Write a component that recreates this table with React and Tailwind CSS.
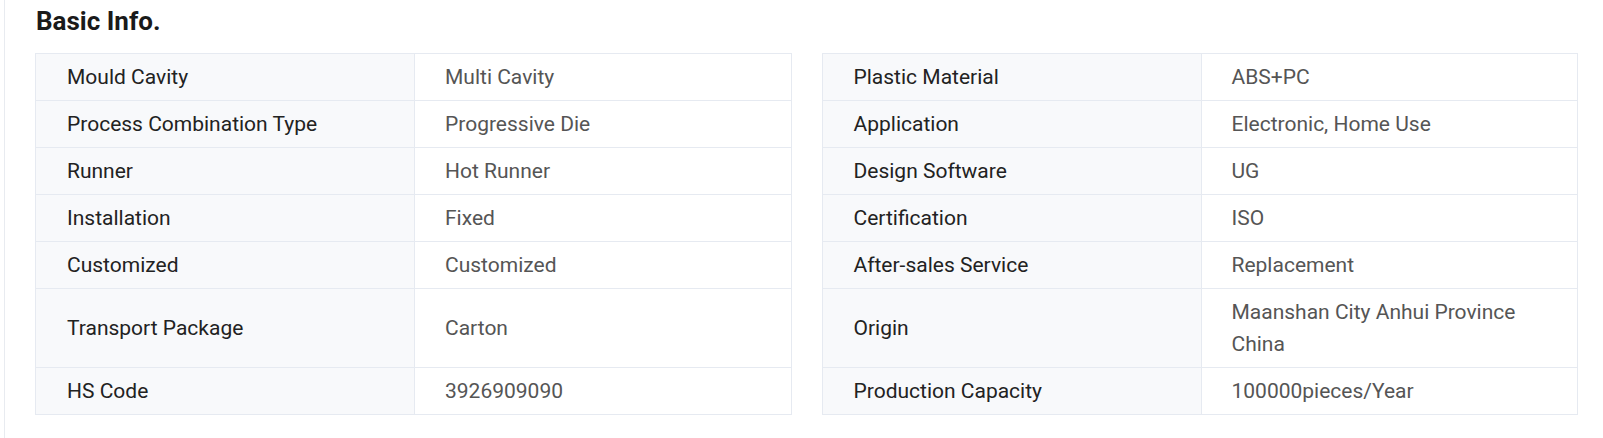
import React from "react";

const rows = [
  ["Mould Cavity", "Multi Cavity", "Plastic Material", "ABS+PC"],
  ["Process Combination Type", "Progressive Die", "Application", "Electronic, Home Use"],
  ["Runner", "Hot Runner", "Design Software", "UG"],
  ["Installation", "Fixed", "Certification", "ISO"],
  ["Customized", "Customized", "After-sales Service", "Replacement"],
  ["Transport Package", "Carton", "Origin", "Maanshan City Anhui Province China"],
  ["HS Code", "3926909090", "Production Capacity", "100000pieces/Year"],
];

function Half({ label, value, first }) {
  return (
    <div
      className={`flex border-x border-b border-[#e6eaf1] ${first ? "border-t" : ""}`}
    >
      <div className="w-[379px] shrink-0 flex items-center bg-[#f8f9fb] border-r border-[#e6eaf1] py-[7px] pl-[31px] pr-4 text-[#222222]">
        {label}
      </div>
      <div className="flex-1 min-w-0 flex items-center py-[7px] pl-[30px] pr-[30px] text-[#555555]">
        {value}
      </div>
    </div>
  );
}

export default function App() {
  return (
    <div
      className="w-[1603px] h-[438px] bg-white"
      style={{ fontFamily: "Roboto, 'Liberation Sans', sans-serif" }}
    >
      <div className="ml-1 h-full border-l border-[#e8ebf0] pl-[30px] pr-[25px] pt-[6px]">
        <h2 className="text-[26px] leading-[30px] font-bold text-[#1a1a1a] pl-[1px] mb-[17px]">
          Basic Info.
        </h2>
        <div className="grid grid-cols-2 gap-x-[30px] text-[21px] leading-[32px]">
          {rows.map((r, i) => (
            <React.Fragment key={i}>
              <Half label={r[0]} value={r[1]} first={i === 0} />
              <Half label={r[2]} value={r[3]} first={i === 0} />
            </React.Fragment>
          ))}
        </div>
      </div>
    </div>
  );
}
